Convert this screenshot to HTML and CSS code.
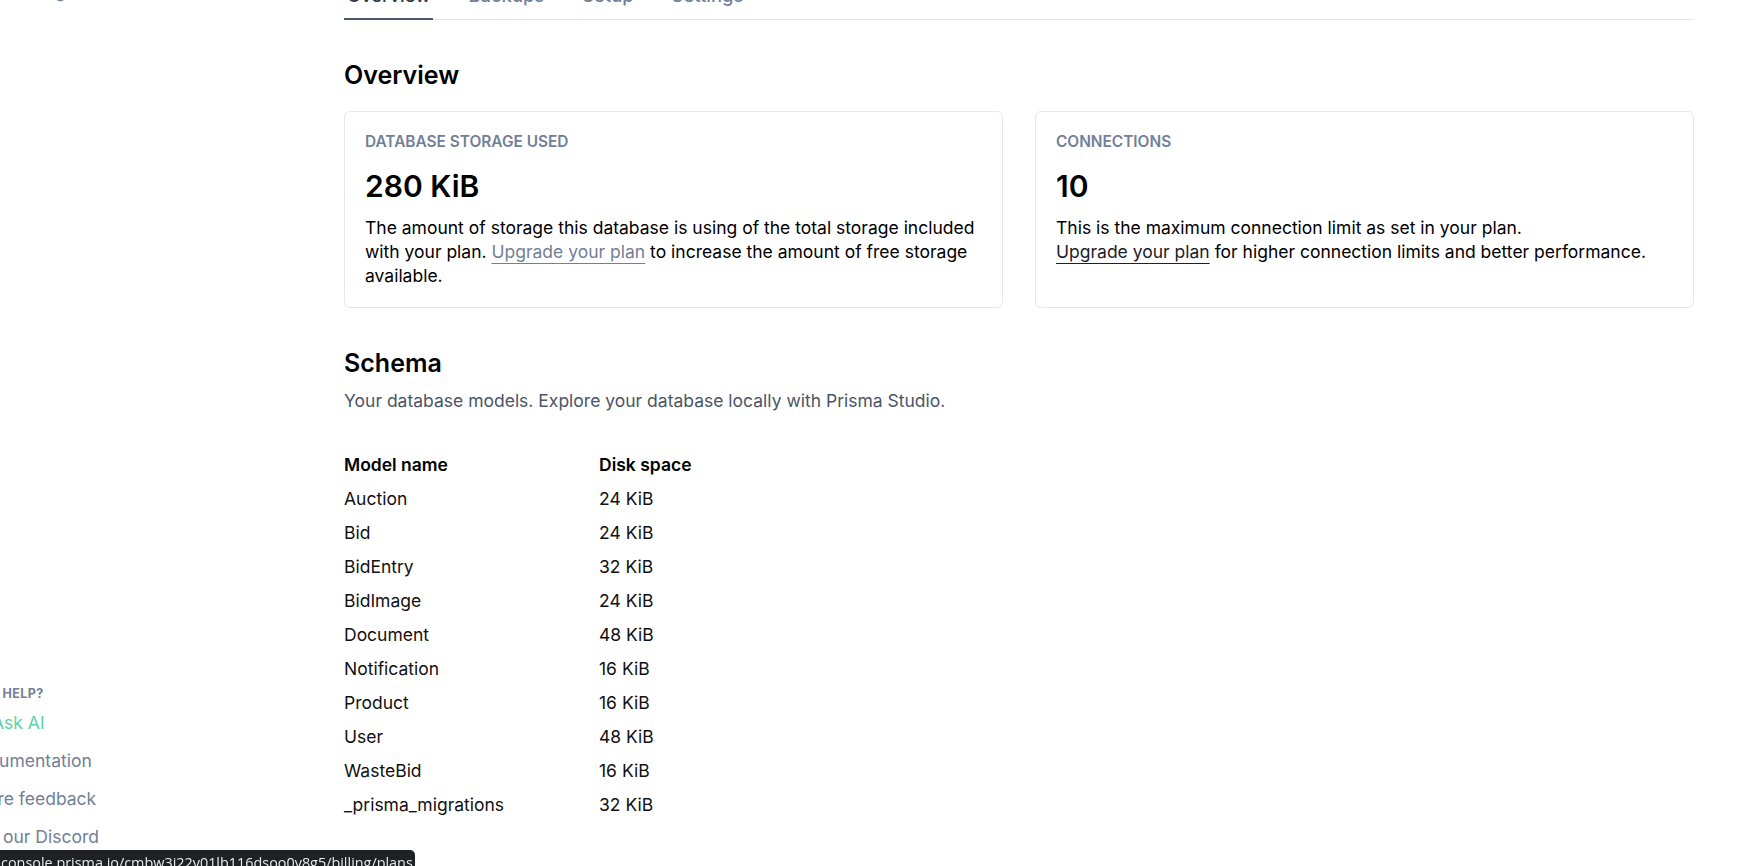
FILE: index.html
```html
<!DOCTYPE html>
<html lang="en">
<head>
<meta charset="utf-8">
<title>Database overview</title>
<link rel="stylesheet" href="styles.css">
</head>
<body>
<div class="app">
  <aside class="sidebar">
    <div class="sidebar-inner">
      <nav class="side-nav">
        <a class="side-link">Billing</a>
      </nav>
      <div class="help">
        <div class="help-title">NEED HELP?</div>
        <a class="help-link help-ai"><svg class="help-icon" viewBox="0 0 16 16" width="16" height="16"><path d="M8 1l1.6 4.4L14 7l-4.4 1.6L8 13l-1.6-4.4L2 7l4.4-1.6z" fill="currentColor"/></svg>Ask AI</a>
        <a class="help-link">Documentation</a>
        <a class="help-link">Share feedback</a>
        <a class="help-link help-discord">Join our Discord</a>
      </div>
    </div>
  </aside>
  <main class="main">
    <nav class="tabs">
      <a class="tab tab-active">Overview</a>
      <a class="tab">Backups</a>
      <a class="tab">Setup</a>
      <a class="tab">Settings</a>
    </nav>
    <section class="overview">
      <h2 class="section-title">Overview</h2>
      <div class="cards">
        <div class="card">
          <div class="card-label">Database storage used</div>
          <div class="card-value">280 KiB</div>
          <p class="card-text">The amount of storage this database is using of the total storage included with your plan. <a class="link-muted">Upgrade your plan</a> to increase the amount of free storage available.</p>
        </div>
        <div class="card">
          <div class="card-label">Connections</div>
          <div class="card-value">10</div>
          <p class="card-text">This is the maximum connection limit as set in your plan.<br><a class="link-dark">Upgrade your plan</a> for higher connection limits and better performance.</p>
        </div>
      </div>
    </section>
    <section class="schema">
      <h2 class="section-title schema-title">Schema</h2>
      <p class="schema-sub">Your database models. Explore your database locally with Prisma Studio.</p>
      <table class="models">
        <thead>
          <tr><th>Model name</th><th>Disk space</th></tr>
        </thead>
        <tbody>
          <tr><td>Auction</td><td>24 KiB</td></tr>
          <tr><td>Bid</td><td>24 KiB</td></tr>
          <tr><td>BidEntry</td><td>32 KiB</td></tr>
          <tr><td>BidImage</td><td>24 KiB</td></tr>
          <tr><td>Document</td><td>48 KiB</td></tr>
          <tr><td>Notification</td><td>16 KiB</td></tr>
          <tr><td>Product</td><td>16 KiB</td></tr>
          <tr><td>User</td><td>48 KiB</td></tr>
          <tr><td>WasteBid</td><td>16 KiB</td></tr>
          <tr><td>_prisma_migrations</td><td>32 KiB</td></tr>
        </tbody>
      </table>
    </section>
  </main>
</div>
<div class="status-bar"><span class="status-text">console.prisma.io/cmbw3i22v01lb116dsoo0v8g5/billing/plans</span></div>
</body>
</html>
```

FILE: styles.css
```css
* { box-sizing: border-box; }
html, body { margin: 0; padding: 0; }
body {
  background: #ffffff;
  font-family: Inter, "Noto Sans", sans-serif;
  color: #111827;
  overflow: hidden;
  width: 1750px;
  height: 866px;
}
a { cursor: pointer; }

/* page is scrolled slightly down and to the right */
.app {
  display: flex;
  margin-top: -24px;
  height: 890px;
}

.sidebar {
  width: 280px;
  flex: none;
  overflow: hidden;
}
.sidebar-inner {
  margin-left: -40px;
  height: 100%;
  display: flex;
  flex-direction: column;
  justify-content: space-between;
  padding: 4px 0 10px;
}
.side-link {
  display: block;
  padding-left: 60px;
  font-size: 16px;
  line-height: 24px;
  color: #718096;
}
.help-title {
  padding-left: 4px;
  font-size: 12.5px;
  line-height: 16px;
  font-weight: 700;
  letter-spacing: 0.03em;
  color: #718096;
  margin-bottom: 2px;
}
.help-link {
  display: flex;
  align-items: center;
  padding: 7px 0 7px 6px;
  font-size: 17.5px;
  line-height: 24px;
  color: #718096;
}
.help-discord { padding-left: 3px; }
.help-ai { color: #5ecfa8; }
.help-icon { width: 16px; height: 16px; margin-right: 10px; flex: none; }

.main {
  flex: 1;
  padding: 0 56px 0 64px;
  min-width: 0;
}

.tabs {
  display: flex;
  gap: 32px;
  padding-top: 7px;
  border-bottom: 1px solid #e2e8f0;
}
.tab {
  font-size: 18.4px;
  line-height: 24px;
  font-weight: 500;
  color: #718096;
  padding: 0 3px 11px;
  margin-bottom: -1px;
  border-bottom: 2px solid transparent;
}
.tab-active {
  color: #2d3748;
  border-bottom-color: #4a5568;
}

.overview { padding-top: 39px; }
.section-title {
  margin: 0;
  font-size: 25px;
  line-height: 32px;
  font-weight: 600;
  color: #000;
}
.cards {
  margin-top: 20px;
  display: grid;
  grid-template-columns: 1fr 1fr;
  gap: 32px;
}
.card {
  border: 1px solid #e2e8f0;
  border-radius: 6px;
  padding: 20px 20px 19px;
  background: #fff;
}
.card-label {
  font-size: 15.4px;
  line-height: 20px;
  font-weight: 600;
  text-transform: uppercase;
  color: #718096;
}
.card-value {
  margin-top: 16px;
  font-size: 30px;
  line-height: 36px;
  font-weight: 600;
  color: #000;
}
.card-text {
  margin: 12px 0 0;
  font-size: 17.5px;
  line-height: 24px;
  color: #000;
}
.link-muted {
  color: #718096;
  text-decoration: underline;
  text-decoration-color: #718096;
  text-underline-offset: 5px;
}
.link-dark {
  color: #1a202c;
  text-decoration: underline;
  text-decoration-color: #1a202c;
  text-underline-offset: 5px;
}

.schema { padding-top: 39px; }
.schema-sub {
  margin: 10px 0 0;
  font-size: 17.5px;
  line-height: 24px;
  color: #4a5568;
}
.models {
  margin-top: 35px;
  border-collapse: collapse;
  font-size: 17.5px;
  line-height: 24px;
}
.models th, .models td {
  padding: 5px 0;
  text-align: left;
  vertical-align: top;
}
.models th:first-child, .models td:first-child { width: 255px; }
.models th { font-weight: 600; color: #000; }
.models td { color: #111; }

.status-bar {
  position: fixed;
  left: 0;
  bottom: 0;
  width: 415px;
  height: 16px;
  overflow: hidden;
  background: #202124;
  border-top-right-radius: 5px;
  white-space: nowrap;
}
.status-text {
  display: block;
  margin-left: 1px;
  padding-top: 4px;
  font-family: "Open Sans", "Noto Sans", sans-serif;
  font-size: 14.4px;
  line-height: 18px;
  color: #e8eaed;
}
```
